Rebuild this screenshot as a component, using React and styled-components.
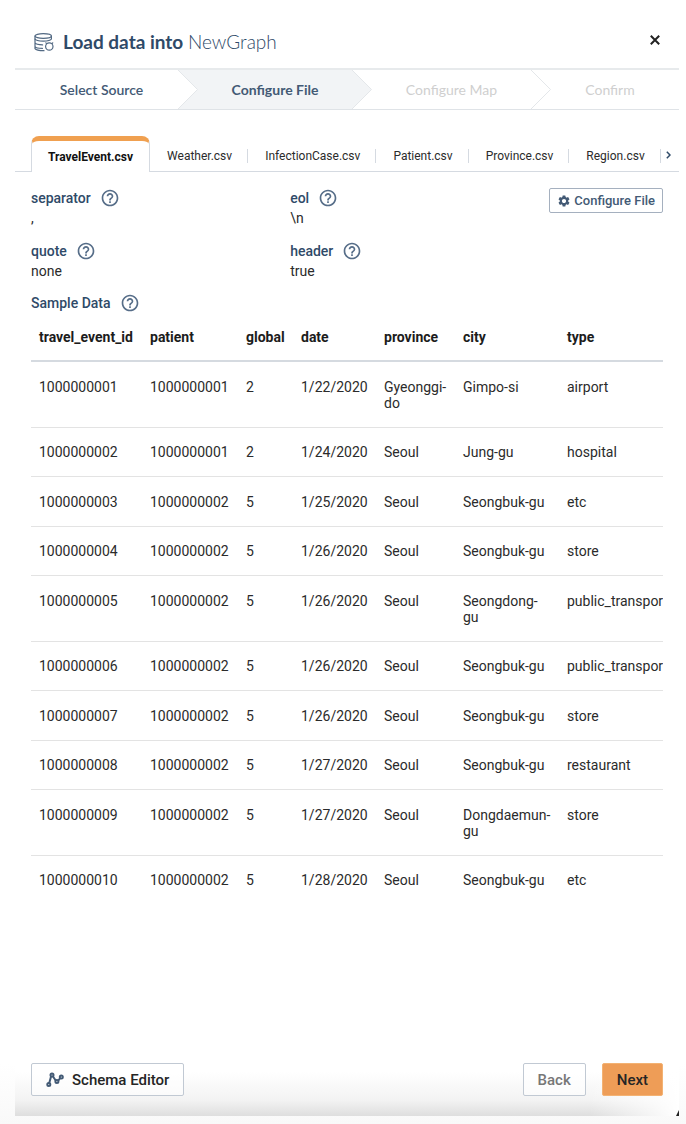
import React, { useState } from "react";
import styled, { createGlobalStyle } from "styled-components";
import { MdHelpOutline, MdSettings } from "react-icons/md";

const navy = "#2f4a68";
const line = "#dfe3e7";

const GlobalStyle = createGlobalStyle`
  *, *::before, *::after { box-sizing: border-box; }
  body {
    margin: 0;
    background: #fff;
    color: #2b2b2b;
    font-family: Roboto, "Liberation Sans", sans-serif;
    font-size: 14px;
    line-height: 20px;
  }
  button { font: inherit; cursor: pointer; }
`;

const Page = styled.div`
  min-height: 100vh;
  padding: 0 7px 8px 15px;
  background: linear-gradient(to top, #f9f9f9, #fff 60px);
`;

const Dialog = styled.main`
  position: relative;
  min-height: calc(100vh - 8px);
  display: flex;
  flex-direction: column;
  background: #fff;
`;

const Header = styled.header`
  display: flex;
  align-items: center;
  height: 68px;
  padding: 16px 16px 0 18px;
`;

const Title = styled.h1`
  flex: 1;
  margin: 0 0 0 8px;
  color: ${navy};
  font-family: Lato, sans-serif;
  font-size: 19px;
  line-height: 24px;
  font-weight: 700;
`;

const GraphName = styled.span`
  font-weight: 300;
`;

const CloseButton = styled.button`
  display: grid;
  place-items: center;
  width: 16px;
  height: 16px;
  margin-bottom: 4px;
  padding: 0;
  border: 0;
  background: none;
  color: #222;
`;

const Steps = styled.ol`
  display: flex;
  height: 42px;
  margin: 0;
  padding: 0;
  list-style: none;
  border-top: 2px solid #e7eaec;
  border-bottom: 1px solid ${line};
`;

const Step = styled.li`
  position: relative;
  display: flex;
  align-items: center;
  justify-content: center;
  flex: ${(p) => p.$grow} 1 0;
  padding-left: ${(p) => (p.$edge ? 10 : 20)}px;
  background: ${(p) => (p.$active ? "#f2f4f6" : "#fff")};
  color: ${(p) => (p.$disabled ? "#cfcfcf" : "#435a75")};
  font-family: Lato, sans-serif;
  font-size: 14px;
  font-weight: ${(p) => (p.$active ? 700 : p.$disabled ? 400 : 600)};
`;

const StepArrow = styled.svg`
  position: absolute;
  z-index: 1;
  left: 100%;
  top: 0;
  height: 100%;
  width: 20px;
`;

const TabBar = styled.nav`
  display: flex;
  align-items: flex-end;
  margin-top: 26px;
  padding-left: 16px;
  border-bottom: 1px solid #d5dae1;
`;

const Tab = styled.button`
  position: relative;
  height: ${(p) => (p.$active ? 36 : 32)}px;
  margin-bottom: -1px;
  padding: ${(p) => (p.$active ? "0 16px" : "0 16px 0 17px")};
  border: ${(p) => (p.$active ? "1px solid #d5dae1" : "0")};
  border-top: ${(p) => (p.$active ? "5px solid #f0a050" : "0")};
  border-bottom: 0;
  border-radius: ${(p) => (p.$active ? "8px 8px 0 0" : "0")};
  background: ${(p) => (p.$active ? "#fff" : "none")};
  color: ${(p) => (p.$active ? "#111" : "#2b2b2b")};
  font-size: 12px;
  line-height: 16px;
  font-weight: ${(p) => (p.$active ? 700 : 400)};
  white-space: nowrap;

  &::after {
    content: "";
    display: ${(p) => (p.$active ? "none" : "block")};
    position: absolute;
    right: 0;
    top: 9px;
    height: 14px;
    border-right: 1px solid #d5dae1;
  }
`;

const ScrollTabs = styled.button`
  display: grid;
  place-items: center;
  flex: none;
  width: 16px;
  height: 32px;
  padding: 0;
  border: 0;
  background: none;
  color: ${navy};
`;

const Settings = styled.section`
  display: flex;
  align-items: flex-start;
  padding: 16px 16px 0;
`;

const SettingList = styled.dl`
  flex: 1;
  display: grid;
  grid-template-columns: 1fr 1fr;
  row-gap: 13px;
  margin: 0;
`;

const Label = styled.dt`
  display: flex;
  align-items: center;
  gap: 9px;
  color: ${navy};
  font-weight: 500;
`;

const Value = styled.dd`
  margin: 0;
`;

const SampleHeading = styled.h2`
  display: flex;
  align-items: center;
  gap: 9px;
  margin: 12px 16px 0;
  color: ${navy};
  font-size: 14px;
  line-height: 20px;
  font-weight: 500;
`;

const HelpButton = styled.button`
  display: grid;
  place-items: center;
  padding: 0;
  border: 0;
  background: none;
  color: #566d88;
`;

const ConfigureButton = styled.button`
  display: flex;
  align-items: center;
  gap: 3px;
  height: 25px;
  padding: 0 7px;
  border: 1px solid #a5b0bf;
  border-radius: 2px;
  background: #fff;
  color: #435a75;
  font-size: 13px;
  line-height: 20px;
  font-weight: 500;
`;

const TableFrame = styled.div`
  margin: 8px 16px 0;
  overflow: hidden;
`;

const Table = styled.table`
  width: 700px;
  table-layout: fixed;
  border-collapse: separate;
  border-spacing: 0;
  line-height: 16px;
`;

const HeadCell = styled.th`
  height: 41px;
  padding: 0 8px 7px;
  border-bottom: 2px solid #d5dae0;
  color: #1c1c1c;
  font-weight: 700;
  text-align: left;
`;

const Row = styled.tr`
  &:nth-child(odd) td { padding-top: 17px; }
  &:last-child td { border-bottom: 0; }
`;

const Cell = styled.td`
  padding: 16px 8px;
  border-bottom: 1px solid #e3e3e3;
  vertical-align: top;
`;

const Footer = styled.footer`
  position: relative;
  display: flex;
  align-items: center;
  gap: 16px;
  margin-top: auto;
  padding: 20px 16px;
  background:
    linear-gradient(to left, #fff, rgba(255, 255, 255, 0) 90px),
    linear-gradient(to top, #dedede, #f3f3f3 16px, #fff 44px);
`;

const FooterButton = styled.button`
  display: flex;
  align-items: center;
  gap: 8px;
  height: 33px;
  margin-right: ${(p) => (p.$start ? "auto" : "0")};
  padding: 0 14px;
  border: 1px solid ${(p) => (p.$primary ? "#f3b273" : "#c1c9d3")};
  border-radius: 2px;
  background: ${(p) => (p.$primary ? "#ee9d57" : "rgba(255, 255, 255, 0.6)")};
  color: ${(p) => (p.$muted ? "#777" : "#252525")};
  font-size: 15px;
  font-weight: 500;
`;

const ResizeCorner = styled.svg`
  position: absolute;
  right: 0;
  bottom: 0;
`;

function DatabaseIcon() {
  return (
    <svg width="22" height="20" viewBox="0 0 22 20" fill="none" stroke="#526983" strokeWidth="1.2" strokeLinecap="round" aria-hidden="true">
      <ellipse cx="10.2" cy="4" rx="8.2" ry="2.3" />
      <path d="M2 4v3c.6 1.3 4 2.1 8.2 2.1S17.800 8.300 18.400 7V4" />
      <path d="M2 7v3.800c.6 1.200 3.600 2 7.600 2.100M2 10.800v3.600c.6 1.200 3.600 1.900 7.400 2M2 14.400v2.200c.8 1.300 4.600 2.100 9 2.100" />
      <circle cx="16.300" cy="14.500" r="3.700" />
      <path d="M13.400 11.400l-.5-.6M19.200 11.400l.5-.6" />
    </svg>
  );
}

function SchemaIcon() {
  return (
    <svg width="18" height="16" viewBox="0 0 18 16" fill="none" stroke="#435a75" strokeWidth="2" aria-hidden="true">
      <path d="M3.200 11.300L5.100 4.200M6.800 4.200l3.100 4.600M12 8.800l2.200-2.600" />
      <circle cx="2.800" cy="12.600" r="1.500" />
      <circle cx="6" cy="2.900" r="1.500" />
      <circle cx="10.900" cy="9.500" r="1.500" />
      <circle cx="15.300" cy="5" r="1.500" />
    </svg>
  );
}

function Help({ topic }) {
  return (
    <HelpButton type="button" aria-label={`Help: ${topic}`}>
      <MdHelpOutline size={20} />
    </HelpButton>
  );
}

const steps = [
  { label: "Select Source", grow: 153, edge: true },
  { label: "Configure File", grow: 154, active: true },
  { label: "Configure Map", grow: 159, disabled: true },
  { label: "Confirm", grow: 138, disabled: true, edge: true },
];

const files = ["TravelEvent.csv", "Weather.csv", "InfectionCase.csv", "Patient.csv", "Province.csv", "Region.csv"];

const settings = [
  ["separator", ","],
  ["eol", "\\n"],
  ["quote", "none"],
  ["header", "true"],
];

const columns = [
  ["travel_event_id", 111],
  ["patient", 96],
  ["global", 55],
  ["date", 83],
  ["province", 79],
  ["city", 104],
  ["type", 172],
];

const rows = [
  ["1000000001", "1000000001", "2", "1/22/2020", "Gyeonggi-do", "Gimpo-si", "airport"],
  ["1000000002", "1000000001", "2", "1/24/2020", "Seoul", "Jung-gu", "hospital"],
  ["1000000003", "1000000002", "5", "1/25/2020", "Seoul", "Seongbuk-gu", "etc"],
  ["1000000004", "1000000002", "5", "1/26/2020", "Seoul", "Seongbuk-gu", "store"],
  ["1000000005", "1000000002", "5", "1/26/2020", "Seoul", "Seongdong-gu", "public_transportation"],
  ["1000000006", "1000000002", "5", "1/26/2020", "Seoul", "Seongbuk-gu", "public_transportation"],
  ["1000000007", "1000000002", "5", "1/26/2020", "Seoul", "Seongbuk-gu", "store"],
  ["1000000008", "1000000002", "5", "1/27/2020", "Seoul", "Seongbuk-gu", "restaurant"],
  ["1000000009", "1000000002", "5", "1/27/2020", "Seoul", "Dongdaemun-gu", "store"],
  ["1000000010", "1000000002", "5", "1/28/2020", "Seoul", "Seongbuk-gu", "etc"],
];

const Col = styled.col`
  width: ${(p) => p.$width}px;
`;

export default function App() {
  const [current, setCurrent] = useState(files[0]);
  return (
    <Page>
      <GlobalStyle />
      <Dialog>
        <Header>
          <DatabaseIcon />
          <Title>
            Load data into <GraphName>NewGraph</GraphName>
          </Title>
          <CloseButton type="button" aria-label="Close">
            <svg width="10" height="10" viewBox="0 0 10 10" stroke="currentColor" strokeWidth="2" aria-hidden="true">
              <path d="M.8.8l8.4 8.4M9.2.8L.8 9.2" />
            </svg>
          </CloseButton>
        </Header>
        <Steps>
          {steps.map((s, i) => (
            <Step key={s.label} $grow={s.grow} $edge={s.edge} $active={s.active} $disabled={s.disabled}>
              {s.label}
              {i < steps.length - 1 && (
                <StepArrow viewBox="0 0 20 39" preserveAspectRatio="none" aria-hidden="true">
                  <path d="M-1 0H0L19.5 19.5L0 39H-1Z" fill={s.active ? "#f2f4f6" : "#fff"} />
                  <path d="M0 0L19.5 19.5L0 39" fill="none" stroke="#e4e7ea" />
                </StepArrow>
              )}
            </Step>
          ))}
        </Steps>
        <TabBar>
          {files.map((f) => (
            <Tab key={f} type="button" $active={f === current} onClick={() => setCurrent(f)}>
              {f}
            </Tab>
          ))}
          <ScrollTabs type="button" aria-label="More files">
            <svg width="5" height="8" viewBox="0 0 5 8" fill="none" stroke="currentColor" strokeWidth="1.5" aria-hidden="true">
              <path d="M.8.8L4 4L.8 7.2" />
            </svg>
          </ScrollTabs>
        </TabBar>
        <Settings>
          <SettingList>
            {settings.map(([name, value]) => (
              <div key={name}>
                <Label>
                  {name}
                  <Help topic={name} />
                </Label>
                <Value>{value}</Value>
              </div>
            ))}
          </SettingList>
          <ConfigureButton type="button">
            <MdSettings size={14} />
            Configure File
          </ConfigureButton>
        </Settings>
        <SampleHeading>
          Sample Data
          <Help topic="Sample Data" />
        </SampleHeading>
        <TableFrame>
          <Table>
            <colgroup>
              {columns.map(([name, width]) => (
                <Col key={name} $width={width} />
              ))}
            </colgroup>
            <thead>
              <tr>
                {columns.map(([name]) => (
                  <HeadCell key={name} scope="col">{name}</HeadCell>
                ))}
              </tr>
            </thead>
            <tbody>
              {rows.map((r) => (
                <Row key={r[0]}>
                  {r.map((c, i) => (
                    <Cell key={columns[i][0]}>{c}</Cell>
                  ))}
                </Row>
              ))}
            </tbody>
          </Table>
        </TableFrame>
        <Footer>
          <FooterButton type="button" $start>
            <SchemaIcon />
            Schema Editor
          </FooterButton>
          <FooterButton type="button" $muted>Back</FooterButton>
          <FooterButton type="button" $primary>Next</FooterButton>
          <ResizeCorner width="3" height="6" viewBox="0 0 3 6" aria-hidden="true">
            <path d="M3 0V6H0Z" fill="#222" />
          </ResizeCorner>
        </Footer>
      </Dialog>
    </Page>
  );
}
